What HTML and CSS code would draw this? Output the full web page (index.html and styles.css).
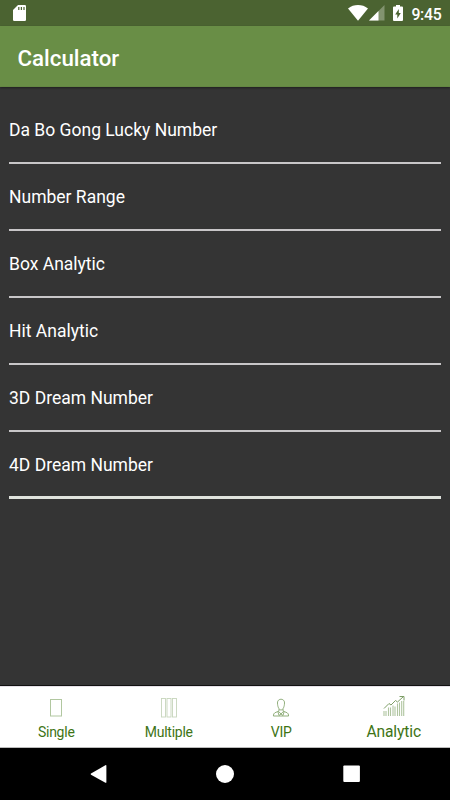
FILE: index.html
```html
<!DOCTYPE html>
<html lang="en">
<head>
    <meta charset="UTF-8">
    <meta name="viewport" content="width=device-width, initial-scale=1.0">
    <title>Calculator</title>
    <link rel="stylesheet" href="styles.css">
</head>
<body>
    <div class="status-bar">
        <svg class="sd-icon" width="14" height="17" viewBox="0 0 14 17">
            <path fill="#fff" d="M5 0H11.8Q13 0 13 1.2V14.8Q13 16 11.8 16H1.2Q0 16 0 14.8V5Z"/>
            <path stroke="#4b6331" stroke-width="1.2" d="M5.8 2v3M8.4 2v3M11 2v3"/>
        </svg>
        <div class="status-right">
            <svg class="wifi-icon" width="20" height="16" viewBox="0 0 20 16">
                <path fill="#fff" d="M0 3.4C5.8-1.1 14.2-1.1 20 3.4L10 15.7Z"/>
            </svg>
            <svg class="signal-icon" width="16" height="16" viewBox="0 0 16 16">
                <path fill="#82936f" d="M15.5 0V15.5H0Z"/>
                <path fill="#fff" d="M9.5 6V15.5H0Z"/>
            </svg>
            <svg class="battery-icon" width="10" height="16" viewBox="0 0 10 16">
                <path fill="#fff" d="M3 0H7V1.5H9Q10 1.5 10 2.5V15Q10 16 9 16H1Q0 16 0 15V2.5Q0 1.5 1 1.5H3Z"/>
                <path fill="#4b6331" d="M5.8 4V8H7.8L4.3 13.5V9.6H2.2Z"/>
            </svg>
            <span class="clock">9:45</span>
        </div>
    </div>

    <header class="app-bar">
        <h1>Calculator</h1>
    </header>

    <main class="menu">
        <a class="menu-item">Da Bo Gong Lucky Number</a>
        <a class="menu-item">Number Range</a>
        <a class="menu-item">Box Analytic</a>
        <a class="menu-item">Hit Analytic</a>
        <a class="menu-item">3D Dream Number</a>
        <a class="menu-item">4D Dream Number</a>
    </main>

    <nav class="tabs">
        <a class="tab">
            <svg width="24" height="24" viewBox="0 0 24 24">
                <rect x="6.5" y="3.5" width="11" height="16.5" fill="none" stroke="#b1c7a0"/>
            </svg>
            <span>Single</span>
        </a>
        <a class="tab">
            <svg width="24" height="24" viewBox="0 0 24 24">
                <g fill="none" stroke="#c7d6bc" stroke-width=".9">
                    <rect x="4.5" y="2.5" width="4" height="18.5"/>
                    <rect x="10" y="2.5" width="4" height="18.5"/>
                    <rect x="15.5" y="2.5" width="4" height="18.5"/>
                </g>
            </svg>
            <span>Multiple</span>
        </a>
        <a class="tab">
            <svg width="24" height="24" viewBox="0 0 24 24">
                <g fill="none" stroke="#86a66e" stroke-width=".9">
                    <path d="M8.5 7C8.2 2 15.8 2 15.5 7C15.5 10.5 14 14 12 14S8.5 10.5 8.5 7Z"/>
                    <path d="M10 13V15L5.8 16.8Q4.4 17.5 4.4 20H19.6Q19.6 17.5 18.2 16.8L14 15V13"/>
                    <path d="M9.5 15.3L12 18L14.5 15.3M9 16L10 19.5L12 18L14 19.5L15 16"/>
                </g>
            </svg>
            <span>VIP</span>
        </a>
        <a class="tab active">
            <svg width="24" height="24" viewBox="0 0 24 24">
                <path fill="none" stroke="#b0c5a0" stroke-width="1.1" d="M2 17v5M4 17v5M6.5 13.5V22M8.5 13.5V22M11 11.5V22M13 12.5V22M15.5 9.5V22M17.5 8.5V22M19.7 7V22M21.7 7V22"/>
                <path fill="none" stroke="#7d9e66" stroke-width="1" d="M2 14.5L7 9.5L9 11L13.5 6.5L15.5 8L21.5 2.5M17.5 2.5H22V6.5"/>
            </svg>
            <span>Analytic</span>
        </a>
    </nav>

    <div class="system-nav">
        <svg width="18" height="18" viewBox="0 0 18 18"><path fill="#fff" d="M15.4 .2Q16.4-.2 16.4 .8V17.2Q16.4 18.2 15.4 17.7L1 9.7Q.3 9 1 8.4Z"/></svg>
        <svg width="18" height="18" viewBox="0 0 18 18"><circle cx="9" cy="9" r="9" fill="#fff"/></svg>
        <svg width="18" height="18" viewBox="0 0 18 18"><rect x="1.3" y=".4" width="16.6" height="16.6" rx="1" fill="#fff"/></svg>
    </div>
</body>
</html>
```
FILE: styles.css
```css
* {
    margin: 0;
    padding: 0;
    box-sizing: border-box;
}

body {
    display: flex;
    flex-direction: column;
    height: 100vh;
    font-family: Roboto, sans-serif;
    background: #343434;
    color: #fff;
    overflow: hidden;
}

svg {
    display: block;
    flex: none;
}

.status-bar {
    display: flex;
    justify-content: space-between;
    height: 26px;
    padding: 5px 8.5px 0 13px;
    background: #4b6331;
}

.status-right {
    display: flex;
}

.signal-icon {
    margin-left: 1px;
}

.battery-icon {
    margin-left: 8px;
}

.clock {
    margin-left: 8px;
    font-size: 15.8px;
    font-weight: 500;
    line-height: 19px;
    letter-spacing: -0.25px;
}

.app-bar {
    display: flex;
    align-items: center;
    height: 61px;
    padding: 3px 17.5px 0;
    background: #698e46;
    border-bottom: 1px solid #648743;
    box-shadow: 0 1px 2px rgba(0, 0, 0, 0.4);
}

h1 {
    font-size: 22.3px;
    font-weight: 500;
}

.menu {
    flex: 1;
    padding: 10px 9px 0;
}

.menu-item {
    display: block;
    height: 67px;
    border-bottom: 2px solid #c8c6c8;
    font-size: 17.5px;
    line-height: 66px;
}

.menu-item:last-child {
    border-bottom: 3px solid #e0e3dd;
}

.tabs {
    display: flex;
    height: 62px;
    background: #fff;
    border-top: 1px solid #e5e1e8;
    border-bottom: 1px solid #bbb;
    box-shadow: 0 -1px 0 #111;
}

.tab {
    display: flex;
    flex: 1;
    flex-direction: column;
    align-items: center;
    padding-top: 9px;
    color: #3e7415;
    font-size: 14px;
    line-height: 24px;
    letter-spacing: -0.25px;
}

.tab.active {
    padding-top: 7px;
    font-size: 15.6px;
    line-height: 28px;
    letter-spacing: -0.1px;
}

.system-nav {
    display: flex;
    justify-content: space-between;
    height: 52px;
    padding: 17px 90px 0 89.5px;
    background: #000;
}
```
